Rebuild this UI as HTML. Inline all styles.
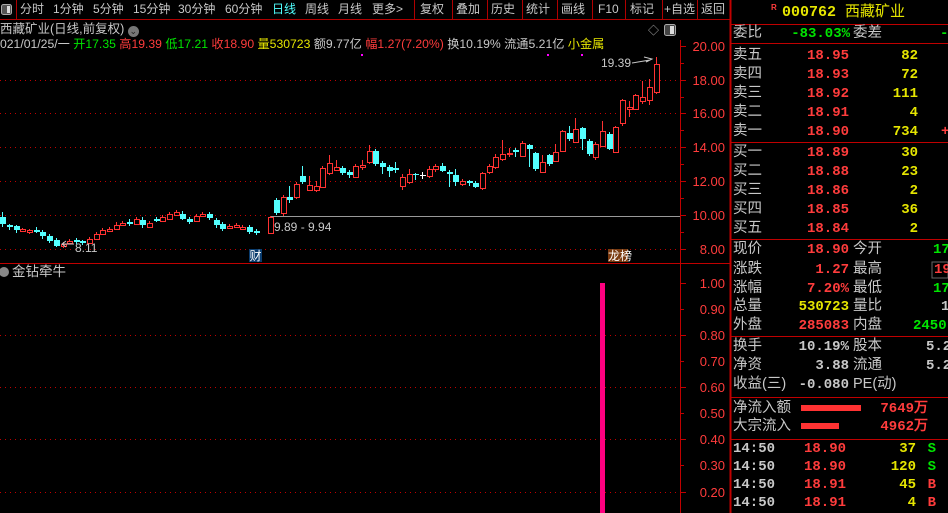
<!DOCTYPE html>
<html><head><meta charset="utf-8"><style>
*{margin:0;padding:0;box-sizing:border-box}
body{width:948px;height:513px;background:#000;overflow:hidden;position:relative;font-family:"Liberation Sans","Noto Sans CJK SC",sans-serif;color:#c8c8c8}
.a{position:absolute;white-space:nowrap;line-height:1}
.t{font-size:12px;top:3px;color:#c8c8c8}
.r{color:#ff3c3c}.g{color:#00e600}.y{color:#e6e600}.c{color:#50ffff}.w{color:#c8c8c8}
.p{font-size:14.5px;font-family:"Liberation Sans","Noto Sans CJK SC",sans-serif}
.n{font-size:14px;font-weight:bold;font-family:"Liberation Mono","Liberation Sans",monospace;text-align:right}
</style></head><body>
<svg class="a" style="left:0;top:0" width="948" height="513">
<line x1="0" y1="19.5" x2="730" y2="19.5" stroke="#b00000"/>
<g stroke="#b00000">
<line x1="16.5" y1="0" x2="16.5" y2="19"/><line x1="414.5" y1="0" x2="414.5" y2="19"/><line x1="452.5" y1="0" x2="452.5" y2="19"/><line x1="487.5" y1="0" x2="487.5" y2="19"/><line x1="522.5" y1="0" x2="522.5" y2="19"/><line x1="557.5" y1="0" x2="557.5" y2="19"/><line x1="592.5" y1="0" x2="592.5" y2="19"/><line x1="625.5" y1="0" x2="625.5" y2="19"/><line x1="662.5" y1="0" x2="662.5" y2="19"/><line x1="697.5" y1="0" x2="697.5" y2="19"/>
</g>
<rect x="1.5" y="4.5" width="10" height="10" rx="2" fill="#555" stroke="#aaa"/><rect x="7" y="6" width="3" height="7" fill="#ddd"/>
<text x="648" y="34" fill="#aaa" font-size="11">◇</text>
<rect x="664.5" y="24.5" width="11" height="11" rx="2" fill="#444" stroke="#aaa"/><rect x="670" y="26" width="4" height="8" fill="#ddd"/>
<g stroke="#c00000" stroke-dasharray="1,4">
<line x1="0" y1="80.5" x2="680" y2="80.5"/><line x1="0" y1="113.5" x2="680" y2="113.5"/><line x1="0" y1="147.5" x2="680" y2="147.5"/><line x1="0" y1="181.5" x2="680" y2="181.5"/><line x1="0" y1="215.5" x2="270" y2="215.5"/><line x1="0" y1="249.5" x2="680" y2="249.5"/>
<line x1="0" y1="335.5" x2="680" y2="335.5"/><line x1="0" y1="387.5" x2="680" y2="387.5"/><line x1="0" y1="439.5" x2="680" y2="439.5"/><line x1="0" y1="492.5" x2="680" y2="492.5"/>
</g>
<line x1="270" y1="216.5" x2="680" y2="216.5" stroke="#999"/>
<line x1="0" y1="263.5" x2="730" y2="263.5" stroke="#c00000"/>
<line x1="680.5" y1="40" x2="680.5" y2="513" stroke="#c00000"/>
<line x1="730.5" y1="0" x2="730.5" y2="513" stroke="#c00000" stroke-width="2"/>
<g stroke="#c00000">
<line x1="680" y1="46.5" x2="686" y2="46.5"/><line x1="680" y1="63.5" x2="684" y2="63.5"/><line x1="680" y1="80.5" x2="686" y2="80.5"/><line x1="680" y1="97.5" x2="684" y2="97.5"/><line x1="680" y1="113.5" x2="686" y2="113.5"/><line x1="680" y1="130.5" x2="684" y2="130.5"/><line x1="680" y1="147.5" x2="686" y2="147.5"/><line x1="680" y1="164.5" x2="684" y2="164.5"/><line x1="680" y1="181.5" x2="686" y2="181.5"/><line x1="680" y1="198.5" x2="684" y2="198.5"/><line x1="680" y1="215.5" x2="686" y2="215.5"/><line x1="680" y1="232.5" x2="684" y2="232.5"/><line x1="680" y1="249.5" x2="686" y2="249.5"/>
<line x1="680" y1="283.5" x2="686" y2="283.5"/><line x1="680" y1="309.5" x2="684" y2="309.5"/><line x1="680" y1="335.5" x2="686" y2="335.5"/><line x1="680" y1="361.5" x2="684" y2="361.5"/><line x1="680" y1="387.5" x2="686" y2="387.5"/><line x1="680" y1="413.5" x2="684" y2="413.5"/><line x1="680" y1="439.5" x2="686" y2="439.5"/><line x1="680" y1="465.5" x2="684" y2="465.5"/><line x1="680" y1="492.5" x2="686" y2="492.5"/>
</g>
<g fill="#ff3c3c" font-size="13" text-anchor="end" font-family="Liberation Sans">
<text x="725" y="51">20.00</text><text x="725" y="85">18.00</text><text x="725" y="118">16.00</text><text x="725" y="152">14.00</text><text x="725" y="186">12.00</text><text x="725" y="220">10.00</text><text x="725" y="254">8.00</text>
<text x="725" y="288">1.00</text><text x="725" y="314">0.90</text><text x="725" y="340">0.80</text><text x="725" y="366">0.70</text><text x="725" y="392">0.60</text><text x="725" y="418">0.50</text><text x="725" y="444">0.40</text><text x="725" y="470">0.30</text><text x="725" y="497">0.20</text>
</g>
<rect x="600" y="283" width="5" height="230" fill="#ff0080"/>
<g fill="#ff00ff"><rect x="361" y="54" width="2" height="2"/><rect x="547" y="54" width="2" height="2"/><rect x="581" y="54" width="2" height="2"/></g>
<g id="cd"></g>
<text x="601" y="67" fill="#c8c8c8" font-size="12">19.39</text>
<path d="M632 63 L650 60 M644 57 L652 59 L646 62" stroke="#c8c8c8" fill="none"/>
<path d="M62 244 L74 244 M66 241 L62 244 L66 247" stroke="#c8c8c8" fill="none"/>
<text x="75" y="252" fill="#c8c8c8" font-size="12">8.11</text>
<text x="274" y="231" fill="#c8c8c8" font-size="12">9.89 - 9.94</text>
<rect x="249" y="249" width="13" height="13" fill="#0a3c6e"/>
<text x="249.5" y="260" fill="#fff" font-size="12">财</text>
<rect x="608" y="249" width="20" height="13" fill="#7a3a10"/>
<text x="608" y="260" fill="#fff" font-size="12">龙榜</text>
<circle cx="4" cy="272" r="5" fill="#888"/>
<g stroke="#c00000">
<line x1="731" y1="24.5" x2="948" y2="24.5"/><line x1="731" y1="43.5" x2="948" y2="43.5"/><line x1="731" y1="142.5" x2="948" y2="142.5"/><line x1="731" y1="239.5" x2="948" y2="239.5"/><line x1="731" y1="336.5" x2="948" y2="336.5"/><line x1="731" y1="397.5" x2="948" y2="397.5"/><line x1="731" y1="439.5" x2="948" y2="439.5"/>
</g>
<rect x="801" y="405" width="60" height="6" fill="#ff3232"/>
<rect x="801" y="423" width="38" height="6" fill="#ff3232"/>
<rect x="932" y="262" width="16" height="16" fill="none" stroke="#666"/>
</svg>
<div class="a t" style="left:20px">分时</div><div class="a t" style="left:53px">1分钟</div><div class="a t" style="left:93px">5分钟</div><div class="a t" style="left:133px">15分钟</div><div class="a t" style="left:178px">30分钟</div><div class="a t" style="left:225px">60分钟</div><div class="a t c" style="left:272px">日线</div><div class="a t" style="left:305px">周线</div><div class="a t" style="left:338px">月线</div><div class="a t" style="left:372px">更多&gt;</div>
<div class="a t" style="left:420px">复权</div><div class="a t" style="left:456px">叠加</div><div class="a t" style="left:491px">历史</div><div class="a t" style="left:526px">统计</div><div class="a t" style="left:561px">画线</div><div class="a t" style="left:598px">F10</div><div class="a t" style="left:630px">标记</div><div class="a t" style="left:664px">+自选</div><div class="a t" style="left:701px">返回</div>
<div class="a" style="left:0;top:23px;font-size:12.5px">西藏矿业(日线,前复权) <span style="display:inline-block;width:11px;height:11px;border-radius:6px;background:#777;color:#222;font-size:9px;text-align:center;line-height:11px;vertical-align:-1px">⌄</span></div>
<div class="a" style="left:0;top:38px;font-size:12.2px">021/01/25/一 <span class="g">开17.35</span> <span class="r">高19.39</span> <span class="g">低17.21</span> <span class="r">收18.90</span> <span class="y">量530723</span> 额9.77亿 <span class="r">幅1.27(7.20%)</span> 换10.19% 流通5.21亿 <span class="y">小金属</span></div>
<div class="a" style="left:12px;top:265px;font-size:13.5px">金钻牵牛</div>
<div class="a r" style="left:771px;top:4px;font-size:8px;font-weight:bold">R</div>
<div class="a y" style="left:782px;top:4px;font-size:15px;font-weight:bold;font-family:'Liberation Mono','Noto Sans CJK SC',monospace">000762 <span style="font-weight:normal;font-family:'Liberation Sans','Noto Sans CJK SC',sans-serif">西藏矿业</span></div>
<div id="rp"></div>
<script>
var rp=document.getElementById('rp'),h='';
function L(x,y,t,c){h+='<div class="a p '+(c||'w')+'" style="left:'+x+'px;top:'+(y-8)+'px">'+t+'</div>';}
function N(r,y,t,c){h+='<div class="a n '+c+'" style="right:'+(948-r)+'px;top:'+(y-7)+'px">'+t+'</div>';}
function R(x,y,t,c){h+='<div class="a n '+c+'" style="left:'+x+'px;top:'+(y-7)+'px;text-align:left">'+t+'</div>';}
L(733,34,'委比');N(850,34,'-83.03%','g');L(853,34,'委差');R(940,34,'-9','g');
var s=[['卖五','18.95','82'],['卖四','18.93','72'],['卖三','18.92','111'],['卖二','18.91','4'],['卖一','18.90','734']];
s.forEach(function(a,i){var y=56+i*19;L(733,y,a[0]);N(849,y,a[1],'r');N(918,y,a[2],'y');});
R(941,132,'+','r');
var b=[['买一','18.89','30'],['买二','18.88','23'],['买三','18.86','2'],['买四','18.85','36'],['买五','18.84','2']];
b.forEach(function(a,i){var y=153+i*19;L(733,y,a[0]);N(849,y,a[1],'r');N(918,y,a[2],'y');});
L(733,250,'现价');N(849,250,'18.90','r');L(853,250,'今开');R(933,250,'17','g');
L(733,270,'涨跌');N(849,270,'1.27','r');L(853,270,'最高');R(934,270,'19','r');
L(733,289,'涨幅');N(849,289,'7.20%','r');L(853,289,'最低');R(933,289,'17','g');
L(733,307,'总量');N(849,307,'530723','y');L(853,307,'量比');R(941,307,'1','w');
L(733,326,'外盘');N(849,326,'285083','r');L(853,326,'内盘');R(913,326,'2450','g');
L(733,347,'换手');N(849,347,'10.19%','w');L(853,347,'股本');R(926,347,'5.21','w');
L(733,366,'净资');N(849,366,'3.88','w');L(853,366,'流通');R(926,366,'5.21','w');
L(733,385,'收益(三)');N(849,385,'-0.080','w');L(853,385,'PE(动)');
L(733,409,'净流入额');N(928,409,'7649万','r');
L(733,427,'大宗流入');N(928,427,'4962万','r');
[['18.90','37','S','g'],['18.90','120','S','g'],['18.91','45','B','r'],['18.91','4','B','r']].forEach(function(a,i){var y=449+i*18;
R(733,y,'14:50','w');N(846,y,a[0],'r');N(916,y,a[1],'y');N(936,y,a[2],a[3]);});
rp.innerHTML=h;
var C=[[2,217,224,'c',212,227],[9,225,227,'c',224,230],[16,226,230,'c',225,233],[22,229,231,'r',228,232],[29,230,232,'r',229,234],[36,230,232,'c',227,233],[42,232,236,'c',230,239],[49,236,241,'c',234,243],[56,240,246,'c',238,247],[63,244,246,'r',242,248],[69,241,243,'r',239,244],[76,240,242,'c',238,244],[82,241,243,'c',240,245],[89,239,243,'r',237,244],[96,234,239,'r',232,240],[102,230,234,'r',228,235],[109,229,231,'r',227,232],[116,225,229,'r',222,230],[122,223,225,'r',221,226],[129,222,224,'c',219,226],[136,219,224,'r',217,225],[142,220,225,'c',217,228],[149,223,227,'r',221,228],[156,219,221,'c',217,222],[162,217,221,'r',215,222],[169,214,219,'r',212,220],[176,212,215,'r',210,216],[182,214,219,'c',211,220],[189,219,222,'c',217,224],[196,216,221,'r',214,222],[202,214,216,'r',212,217],[209,214,218,'c',212,220],[216,220,225,'c',218,228],[222,224,229,'c',222,231],[229,226,228,'r',224,229],[236,225,227,'r',223,228],[242,227,229,'r',225,230],[249,227,232,'c',225,234],[256,231,233,'c',229,235],[270,217,233,'r',216,234],[276,200,213,'c',198,215],[283,197,213,'r',195,216],[289,197,200,'c',186,203],[296,184,197,'r',182,199],[302,176,182,'c',166,184],[309,185,190,'r',176,191],[316,186,190,'r',181,192],[322,168,187,'r',166,188],[329,163,173,'r',155,175],[336,167,170,'r',160,171],[342,168,173,'c',166,175],[349,172,175,'c',170,178],[355,166,177,'r',164,178],[362,165,167,'r',160,170],[369,151,162,'r',145,164],[375,151,164,'c',149,166],[382,163,167,'c',161,174],[389,167,171,'c',165,177],[395,168,170,'c',162,173],[402,177,186,'r',174,190],[409,174,182,'r',169,184],[415,174,175,'c',173,180],[422,175,176,'w',172,179],[429,169,176,'r',166,178],[435,166,169,'r',164,172],[442,166,171,'c',163,172],[449,172,174,'c',170,187],[455,175,182,'c',169,186],[462,181,184,'r',179,186],[469,181,183,'c',180,186],[475,183,187,'c',181,188],[482,173,188,'r',172,190],[489,166,172,'r',164,174],[495,157,167,'r',154,169],[502,154,159,'r',140,161],[509,153,154,'r',148,157],[515,150,152,'c',148,157],[522,143,156,'r',141,157],[529,145,149,'c',144,167],[535,153,169,'c',152,171],[542,162,172,'r',155,173],[549,155,164,'c',154,166],[555,152,161,'r',144,162],[562,131,151,'r',130,152],[569,133,139,'c',126,141],[575,129,142,'r',118,143],[582,128,139,'c',127,150],[589,141,154,'c',139,156],[595,144,157,'r',142,160],[602,131,146,'r',121,147],[609,134,149,'c',132,150],[615,127,152,'r',126,153],[622,100,123,'r',99,126],[629,107,109,'r',101,117],[635,95,109,'r',94,110],[642,97,101,'r',81,104],[649,87,100,'r',79,105],[656,64,92,'r',57,94]];
var g='';C.forEach(function(k){var x=k[0],col=k[3]=='r'?'#ff3232':k[3]=='c'?'#54ffff':'#fff';
g+='<line x1="'+(x+0.5)+'" y1="'+k[4]+'" x2="'+(x+0.5)+'" y2="'+k[5]+'" stroke="'+col+'"/>';
var hgt=Math.max(1,k[2]-k[1]);
if(k[3]=='r')g+='<rect x="'+(x-2)+'.5" y="'+k[1]+'.5" width="5" height="'+hgt+'" fill="#000" stroke="'+col+'"/>';
else g+='<rect x="'+(x-2)+'" y="'+k[1]+'" width="6" height="'+hgt+'" fill="'+col+'"/>';});
document.getElementById('cd').innerHTML=g;
</script>
</body></html>
